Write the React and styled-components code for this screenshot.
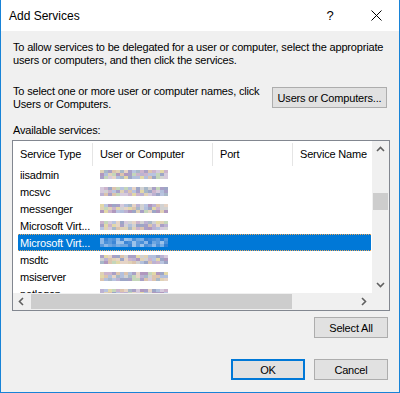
import React from "react";
import styled, { createGlobalStyle } from "styled-components";

const Global = createGlobalStyle`
  html, body { margin: 0; padding: 0; background: #f0f0f0; }
  body { width: 400px; height: 393px; overflow: hidden; }
`;

const Window = styled.div`
  width: 400px;
  height: 393px;
  box-sizing: border-box;
  border: 1px solid #1883d7;
  border-top: none;
  background: #f0f0f0;
  display: flex;
  flex-direction: column;
  font-family: "Liberation Sans", Arial, sans-serif;
  font-size: 11px;
  letter-spacing: -0.18px;
  color: #000;
`;

const TitleBar = styled.div`
  height: 31px;
  flex: none;
  background: #fff;
  display: flex;
  align-items: center;
  padding-left: 8px;
`;

const Title = styled.div`
  font-size: 12px;
  letter-spacing: 0;
  flex: 1;
`;

const CaptionButton = styled.div`
  width: 46px;
  height: 31px;
  display: flex;
  align-items: center;
  justify-content: center;
  font-size: 13px;
`;

const Body = styled.div`
  flex: 1;
  display: flex;
  flex-direction: column;
  padding: 10px 9px 0 11px;
`;

const Text = styled.div`
  line-height: 13px;
  padding-left: 1px;
  white-space: nowrap;
  margin-top: ${(p) => p.$mt || 0}px;
`;

const Row = styled.div`
  display: flex;
  justify-content: space-between;
  align-items: flex-start;
  margin-top: ${(p) => p.$mt || 0}px;
  padding-right: ${(p) => p.$pr || 0}px;
  gap: 8px;
`;

const Button = styled.div`
  box-sizing: border-box;
  width: ${(p) => p.$w}px;
  height: 21px;
  flex: none;
  margin-top: ${(p) => p.$mt || 0}px;
  background: #e1e1e1;
  border: ${(p) => (p.$default ? "2px solid #0078d7" : "1px solid #adadad")};
  display: flex;
  align-items: center;
  justify-content: center;
  white-space: nowrap;
`;

const ListBox = styled.div`
  margin-top: 3px;
  height: 171px;
  flex: none;
  box-sizing: border-box;
  border: 1px solid #828790;
  background: #fff;
  display: grid;
  grid-template-columns: 1fr 17px;
  grid-template-rows: 1fr 17px;
`;

const Content = styled.div`
  overflow: hidden;
  display: flex;
  flex-direction: column;
`;

const Header = styled.div`
  height: 25px;
  flex: none;
  display: flex;
`;

const HeaderCell = styled.div`
  width: ${(p) => p.$w}px;
  flex: none;
  box-sizing: border-box;
  padding-left: 7px;
  display: flex;
  align-items: center;
  position: relative;
  white-space: nowrap;
  &::after {
    content: "";
    position: absolute;
    right: 0;
    top: 2px;
    bottom: 0;
    width: 1px;
    background: #e5e5e5;
  }
`;

const ItemRow = styled.div`
  height: 17px;
  flex: none;
  margin-left: 5px;
  margin-right: 1px;
  box-sizing: border-box;
  display: flex;
  align-items: center;
  background: ${(p) => (p.$sel ? "#0078d7" : "transparent")};
  color: ${(p) => (p.$sel ? "#fff" : "#000")};
  border-top: 1px ${(p) => (p.$sel ? "dotted #e9a85c" : "solid transparent")};
  border-bottom: 1px ${(p) => (p.$sel ? "dotted #e9a85c" : "solid transparent")};
`;

const NameCell = styled.div`
  width: 80px;
  flex: none;
  box-sizing: border-box;
  padding-left: 2px;
  white-space: nowrap;
  overflow: hidden;
`;

const UserCell = styled.div`
  padding-left: 2px;
  display: flex;
  align-items: center;
`;

const VScroll = styled.div`
  background: #f0f0f0;
  display: flex;
  flex-direction: column;
`;

const HScroll = styled.div`
  background: #f0f0f0;
  display: flex;
`;

const Corner = styled.div`
  background: #f0f0f0;
`;

const Arrow = styled.div`
  width: 17px;
  height: 17px;
  flex: none;
  display: flex;
  align-items: center;
  justify-content: center;
`;

const VThumb = styled.div`
  margin: 35px 1px 0 1px;
  height: 17px;
  background: #cdcdcd;
`;

const HThumb = styled.div`
  margin: 1px 0 1px 1px;
  width: 261px;
  background: #cdcdcd;
`;

const Spacer = styled.div`
  flex: 1;
`;

const Footer = styled.div`
  display: flex;
  justify-content: flex-end;
  gap: 9px;
  padding-right: 2px;
  margin-top: ${(p) => p.$mt || 0}px;
`;

const Chevron = ({ dir }) => {
  const pts = {
    up: "1,6 4.5,2.5 8,6",
    down: "1,3 4.5,6.5 8,3",
    left: "6,1 2.5,4.5 6,8",
    right: "3,1 6.5,4.5 3,8",
  }[dir];
  return (
    <svg width="9" height="9" viewBox="0 0 9 9">
      <polyline points={pts} fill="none" stroke="#606060" strokeWidth="1.6" />
    </svg>
  );
};

const normal = ["#d6cadc", "#bcb2d2", "#b3c0dc", "#e0d2b6", "#c4d6ba", "#a9a0c6", "#e6d4c6", "#b9c4e0", "#9da6c6", "#dcc4ae", "#ccb4cc", "#d2d2d2", "#b098be", "#e2d8a8", "#a8b8c8"];
const selected = ["#3d86d6", "#5a9ade", "#6fa6e0", "#4a90d9", "#8db8e8", "#2f7fd4", "#7aaee4", "#9cc2ea"];

const Mosaic = ({ seed, sel }) => {
  const pal = sel ? selected : normal;
  let s = seed * 9301 + 49297;
  const rnd = () => {
    s = (s * 9301 + 49297) % 233280;
    return s / 233280;
  };
  const cells = [];
  for (let r = 0; r < 3; r++) {
    for (let c = 0; c < 17; c++) {
      cells.push(
        <rect key={r + "-" + c} x={c * 4} y={r * 3} width="4" height="3" fill={pal[Math.floor(rnd() * pal.length)]} />
      );
    }
  }
  return (
    <svg width="68" height="9" viewBox="0 0 68 9">
      {cells}
    </svg>
  );
};

const items = [
  "iisadmin",
  "mcsvc",
  "messenger",
  "Microsoft Virt...",
  "Microsoft Virt...",
  "msdtc",
  "msiserver",
  "netlogon",
];

export default function App() {
  return (
    <>
      <Global />
      <Window>
        <TitleBar>
          <Title>Add Services</Title>
          <CaptionButton>?</CaptionButton>
          <CaptionButton>
            <svg width="11" height="11" viewBox="0 0 11 11">
              <path d="M0.5 0.5 L10.5 10.5 M10.5 0.5 L0.5 10.5" stroke="#000" strokeWidth="1" />
            </svg>
          </CaptionButton>
        </TitleBar>
        <Body>
          <Text>
            To allow services to be delegated for a user or computer, select the appropriate
            <br />
            users or computers, and then click the services.
          </Text>
          <Row $mt={18} $pr={3}>
            <Text>
              To select one or more user or computer names, click
              <br />
              Users or Computers.
            </Text>
            <Button $w={115} $mt={2}>Users or Computers...</Button>
          </Row>
          <Text $mt={13}>Available services:</Text>
          <ListBox>
            <Content>
              <Header>
                <HeaderCell $w={80}>Service Type</HeaderCell>
                <HeaderCell $w={120}>User or Computer</HeaderCell>
                <HeaderCell $w={80}>Port</HeaderCell>
                <HeaderCell $w={100}>Service Name</HeaderCell>
              </Header>
              {items.map((name, i) => (
                <ItemRow key={i} $sel={i === 4}>
                  <NameCell>{name}</NameCell>
                  <UserCell>
                    <Mosaic seed={i + 3} sel={i === 4} />
                  </UserCell>
                </ItemRow>
              ))}
            </Content>
            <VScroll>
              <Arrow>
                <Chevron dir="up" />
              </Arrow>
              <VThumb />
              <Spacer />
              <Arrow>
                <Chevron dir="down" />
              </Arrow>
            </VScroll>
            <HScroll>
              <Arrow>
                <Chevron dir="left" />
              </Arrow>
              <HThumb />
              <Spacer />
              <Arrow>
                <Chevron dir="right" />
              </Arrow>
            </HScroll>
            <Corner />
          </ListBox>
          <Footer $mt={6}>
            <Button $w={74}>Select All</Button>
          </Footer>
          <Footer $mt={21}>
            <Button $w={74} $default>OK</Button>
            <Button $w={74}>Cancel</Button>
          </Footer>
        </Body>
      </Window>
    </>
  );
}
